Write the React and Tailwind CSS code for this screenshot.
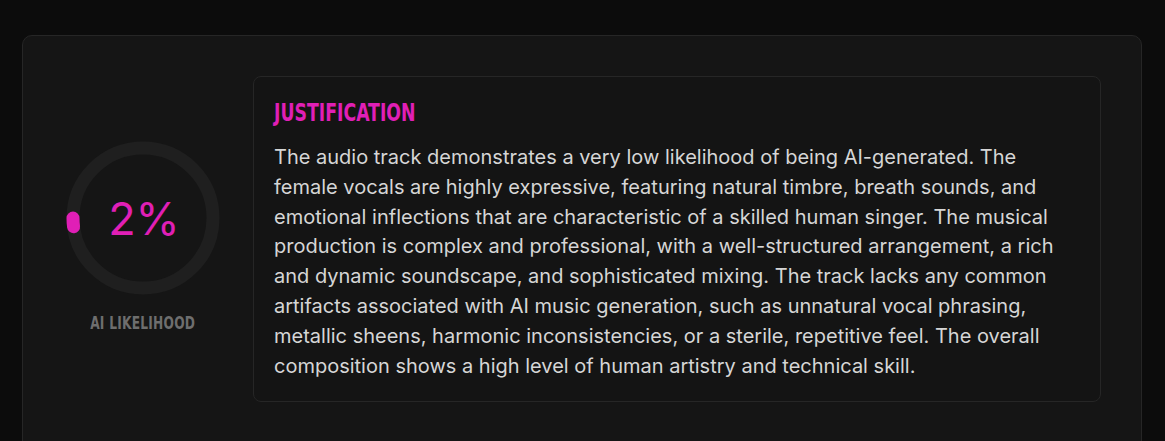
import React from 'react';

const PINK = '#e01fb6';

const Gauge = ({ value }) => {
  const r = 70;
  const c = 2 * Math.PI * r;
  const len = (value / 100) * c;
  return (
    <svg width="160" height="160" viewBox="0 0 160 160" className="block">
      <circle cx="80" cy="80" r={r} fill="none" stroke="#1f1f1f" strokeWidth="13" />
      <circle
        cx="80"
        cy="80"
        r={r}
        fill="none"
        stroke={PINK}
        strokeWidth="13"
        strokeLinecap="round"
        strokeDasharray={`${len} ${c}`}
        transform="rotate(180 80 80) scale(1 -1) translate(0 -160)"
      />
    </svg>
  );
};

const App = () => {
  return (
    <div className="h-[441px] bg-[#0c0c0c] px-[22px] pt-[35px] overflow-hidden" style={{ fontFamily: 'Inter, "Noto Sans", sans-serif' }}>
      <div className="w-[1120px] rounded-[10px] border border-[#262626] bg-[#151515] pl-[40px] pr-[40px] pt-[40px] pb-[48px] flex items-start gap-[30px]">
        <div className="flex flex-col items-center w-[160px] shrink-0 mt-[62px]">
          <div className="relative w-[160px] h-[160px]">
            <Gauge value={2} />
            <div className="absolute inset-0 flex items-center justify-center">
              <span className="text-[45px] leading-none pl-[2px]" style={{ color: PINK }}>2%</span>
            </div>
          </div>
          <div
            className="mt-[17px] text-[17px] font-bold text-[#6e6e6e] leading-none tracking-[0.3px] origin-center scale-x-[0.8]"
            style={{ fontFamily: '"Liberation Sans Narrow", "DejaVu Sans Condensed", sans-serif' }}
          >
            AI LIKELIHOOD
          </div>
        </div>
        <div className="flex-1 rounded-[8px] border border-[#262626] bg-[#141414] px-[20px] pt-[20px] pb-[20px]">
          <h3
            className="text-[25px] font-bold leading-[32px] origin-left scale-x-[0.77] whitespace-nowrap"
            style={{ color: PINK, fontFamily: '"Liberation Sans Narrow", "DejaVu Sans Condensed", sans-serif' }}
          >
            JUSTIFICATION
          </h3>
          <p className="mt-[14px] text-[20px] leading-[29.8px] text-[#d6d6d6]">
            The audio track demonstrates a very low likelihood of being AI-generated. The female vocals are highly expressive, featuring natural timbre, breath sounds, and emotional inflections that are characteristic of a skilled human singer. The musical production is complex and professional, with a well-structured arrangement, a rich and dynamic soundscape, and sophisticated mixing. The track lacks any common artifacts associated with AI music generation, such as unnatural vocal phrasing, metallic sheens, harmonic inconsistencies, or a sterile, repetitive feel. The overall composition shows a high level of human artistry and technical skill.
          </p>
        </div>
      </div>
    </div>
  );
};

export default App;
